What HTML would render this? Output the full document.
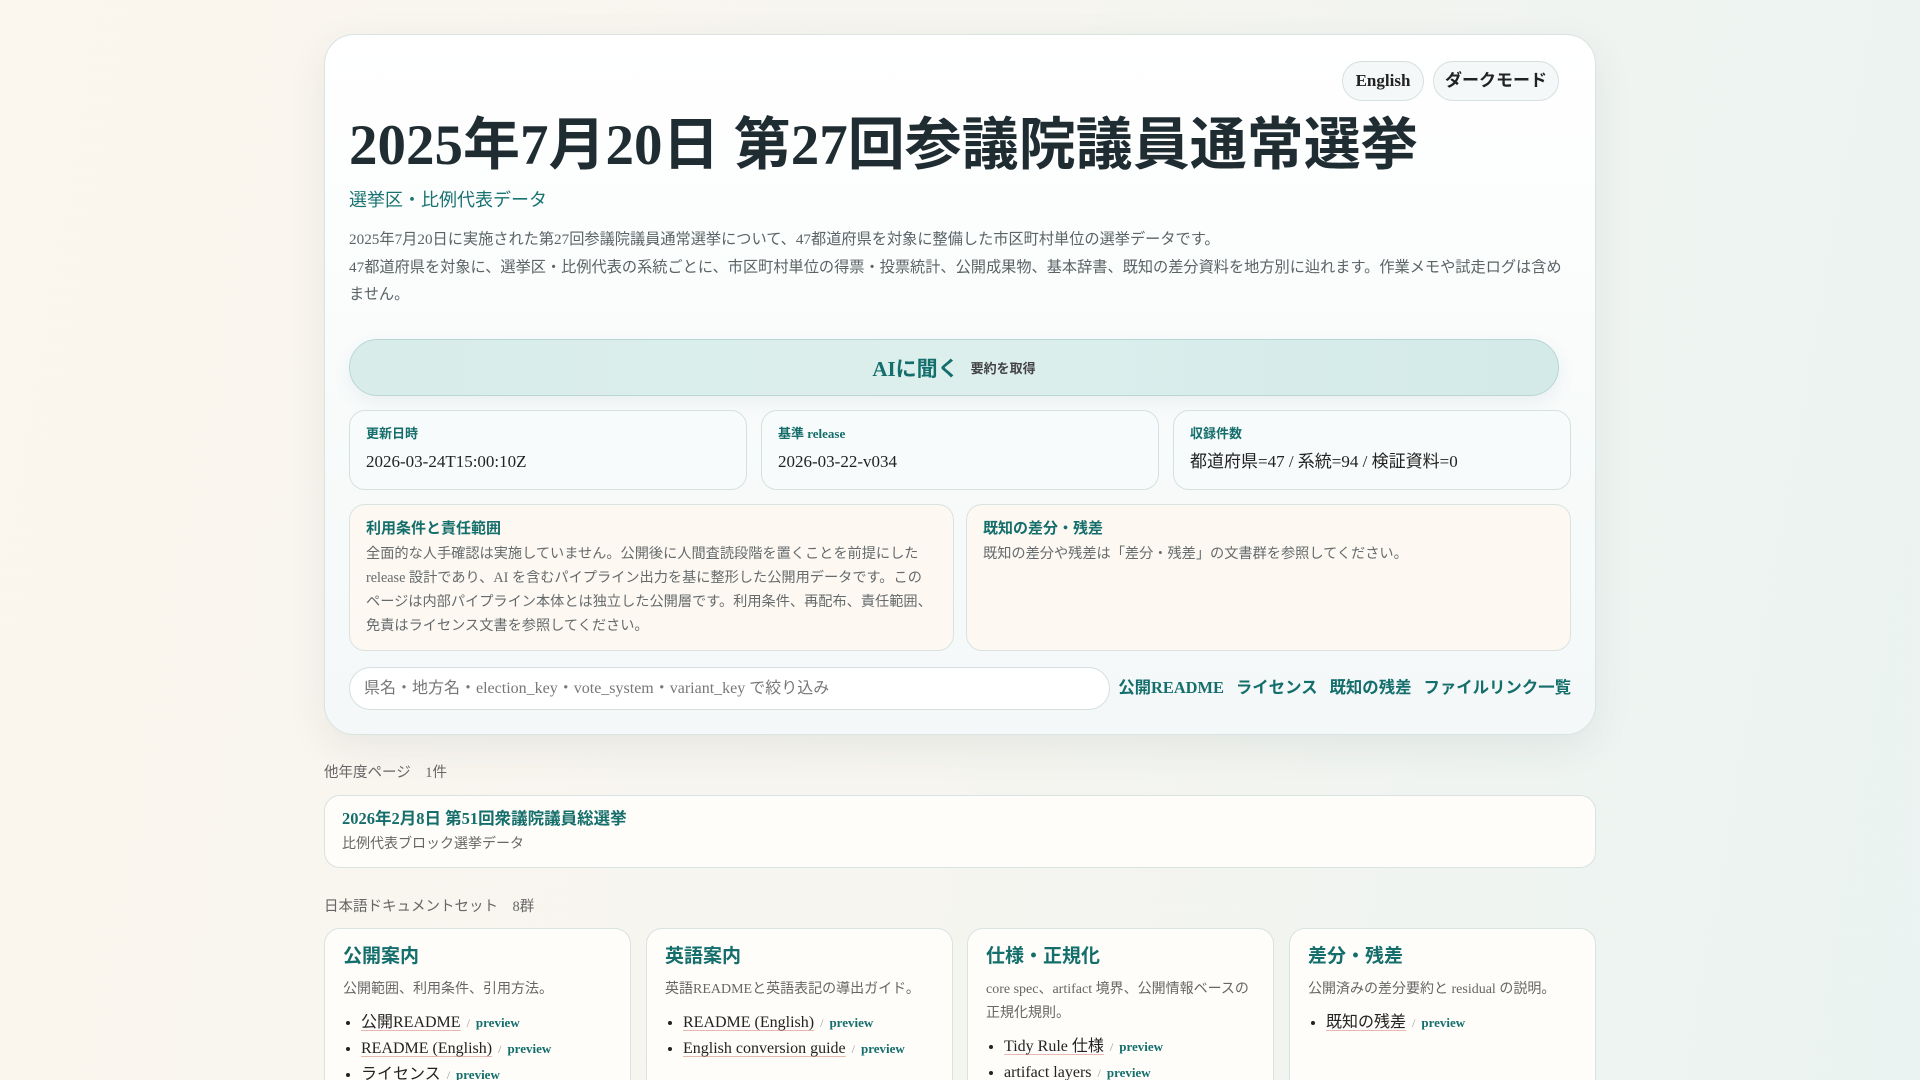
<!DOCTYPE html>
<html lang="ja"><head><meta charset="utf-8"><style>
*{box-sizing:border-box;margin:0;padding:0}
html,body{width:1920px;height:1080px;overflow:hidden}
body{font-family:"Liberation Serif","Noto Sans CJK JP",serif;background:linear-gradient(100deg,#fbf6ee 0%,#f6f5f0 50%,#eaf3f1 100%);color:#1f2d33;position:relative}
.card{position:absolute;left:324px;top:34px;width:1272px;height:701px;border:1px solid #d9e3e2;border-radius:30px;background:linear-gradient(180deg,#ffffff 0%,#f4f8f8 100%);box-shadow:0 12px 40px rgba(40,60,60,.08)}
.btn{position:absolute;top:61px;height:40px;border:1px solid #d6e0df;border-radius:20px;background:#f5f8f8;font-size:17px;font-weight:bold;display:flex;align-items:center;justify-content:center;color:#222;line-height:20px}
h1{position:absolute;left:349px;top:111px;font-size:57px;line-height:70px;font-weight:bold;white-space:nowrap;color:#1f2d33}
.sub{position:absolute;left:349px;top:187px;font-size:18px;line-height:26px;color:#187371}
.desc{position:absolute;left:349px;top:226px;width:1222px;font-size:15.2px;line-height:27.5px;color:#5a6366}
.ai{position:absolute;left:349px;top:339px;width:1210px;height:57px;border:1px solid #b9d6d4;border-radius:29px;background:linear-gradient(90deg,#d8ecea,#dcefed 50%,#d3eae8);display:flex;align-items:center;justify-content:center;box-shadow:0 6px 18px rgba(40,90,90,.08)}
.ai b{font-size:21px;color:#146e6c}.ai span{font-size:13px;color:#444;margin-left:12px;font-weight:bold}
.stat{position:absolute;top:410px;height:80px;width:398px;border:1px solid #d6e0df;border-radius:16px;background:#f8fbfb;padding:14px 16px}
.stat .l{font-size:13px;font-weight:bold;color:#146e6c;line-height:18px}
.stat .v{font-size:17px;margin-top:9px;color:#222;line-height:20px}
.info{position:absolute;top:504px;height:147px;width:605px;border:1px solid #d9e3e2;border-radius:16px;background:#fdf8f2;padding:13px 16px}
.info .l{font-size:15px;font-weight:bold;color:#146e6c;line-height:22px}
.info p{font-size:14.2px;line-height:24px;color:#656b6d;margin-top:2px;white-space:nowrap}
.search{position:absolute;left:349px;top:667px;width:761px;height:43px;border:1px solid #d6e0df;border-radius:22px;background:#fff;font-size:16px;line-height:20px;color:#777;padding:11px 14px}
.links{position:absolute;right:349px;top:677px;font-size:16.4px;line-height:22px;font-weight:bold;color:#146e6c}
.links span{margin-left:12px}
.sec{position:absolute;left:324px;font-size:14.5px;color:#666;line-height:20px}
.other{position:absolute;left:324px;top:795px;width:1272px;height:73px;border:1px solid #d9e3e2;border-radius:16px;background:#fffdf9;padding:12px 17px}
.other b{font-size:16.5px;color:#146e6c;line-height:22px}.other div{font-size:14px;color:#666;margin-top:5px;line-height:20px}
.doc{position:absolute;top:928px;width:307px;height:200px;border:1px solid #d9e3e2;border-radius:16px;background:#fffdf9;padding:15px 18px}
.doc h3{font-size:19px;line-height:26px;color:#146e6c;font-weight:bold}
.doc .d{font-size:14px;color:#666;margin-top:8px;line-height:24px}
.doc ul{margin-top:8px;padding-left:18px;font-size:16px;line-height:26px;color:#222}
.doc li a{text-decoration:underline;text-decoration-color:#e6b8b0;text-underline-offset:3px}
.doc li .s{color:#999;font-size:12px;margin:0 6px}.doc li .p{font-size:13px;font-weight:bold;color:#146e6c}
</style></head><body>
<div class="card"></div>
<div class="btn" style="left:1342px;width:82px">English</div>
<div class="btn" style="left:1433px;width:126px">ダークモード</div>
<h1>2025年7月20日 第27回参議院議員通常選挙</h1>
<div class="sub">選挙区・比例代表データ</div>
<div class="desc">2025年7月20日に実施された第27回参議院議員通常選挙について、47都道府県を対象に整備した市区町村単位の選挙データです。<br>47都道府県を対象に、選挙区・比例代表の系統ごとに、市区町村単位の得票・投票統計、公開成果物、基本辞書、既知の差分資料を地方別に辿れます。作業メモや試走ログは含めません。</div>
<div class="ai"><b>AIに聞く</b><span>要約を取得</span></div>
<div class="stat" style="left:349px"><div class="l">更新日時</div><div class="v">2026-03-24T15:00:10Z</div></div>
<div class="stat" style="left:761px"><div class="l">基準 release</div><div class="v">2026-03-22-v034</div></div>
<div class="stat" style="left:1173px"><div class="l">収録件数</div><div class="v">都道府県=47 / 系統=94 / 検証資料=0</div></div>
<div class="info" style="left:349px"><div class="l">利用条件と責任範囲</div><p>全面的な人手確認は実施していません。公開後に人間査読段階を置くことを前提にした<br>release 設計であり、AI を含むパイプライン出力を基に整形した公開用データです。この<br>ページは内部パイプライン本体とは独立した公開層です。利用条件、再配布、責任範囲、<br>免責はライセンス文書を参照してください。</p></div>
<div class="info" style="left:966px"><div class="l">既知の差分・残差</div><p>既知の差分や残差は「差分・残差」の文書群を参照してください。</p></div>
<div class="search">県名・地方名・election_key・vote_system・variant_key で絞り込み</div>
<div class="links">公開README<span>ライセンス</span><span>既知の残差</span><span>ファイルリンク一覧</span></div>
<div class="sec" style="top:763px">他年度ページ　1件</div>
<div class="other"><b>2026年2月8日 第51回衆議院議員総選挙</b><div>比例代表ブロック選挙データ</div></div>
<div class="sec" style="top:897px">日本語ドキュメントセット　8群</div>
<div class="doc" style="left:324px"><h3>公開案内</h3><div class="d">公開範囲、利用条件、引用方法。</div><ul><li><a>公開README</a><span class="s">/</span><span class="p">preview</span></li><li><a>README (English)</a><span class="s">/</span><span class="p">preview</span></li><li><a>ライセンス</a><span class="s">/</span><span class="p">preview</span></li></ul></div>
<div class="doc" style="left:646px"><h3>英語案内</h3><div class="d">英語READMEと英語表記の導出ガイド。</div><ul><li><a>README (English)</a><span class="s">/</span><span class="p">preview</span></li><li><a>English conversion guide</a><span class="s">/</span><span class="p">preview</span></li></ul></div>
<div class="doc" style="left:967px"><h3>仕様・正規化</h3><div class="d">core spec、artifact 境界、公開情報ベースの<br>正規化規則。</div><ul><li><a>Tidy Rule 仕様</a><span class="s">/</span><span class="p">preview</span></li><li><a>artifact layers</a><span class="s">/</span><span class="p">preview</span></li></ul></div>
<div class="doc" style="left:1289px"><h3>差分・残差</h3><div class="d">公開済みの差分要約と residual の説明。</div><ul><li><a>既知の残差</a><span class="s">/</span><span class="p">preview</span></li></ul></div>
</body></html>
